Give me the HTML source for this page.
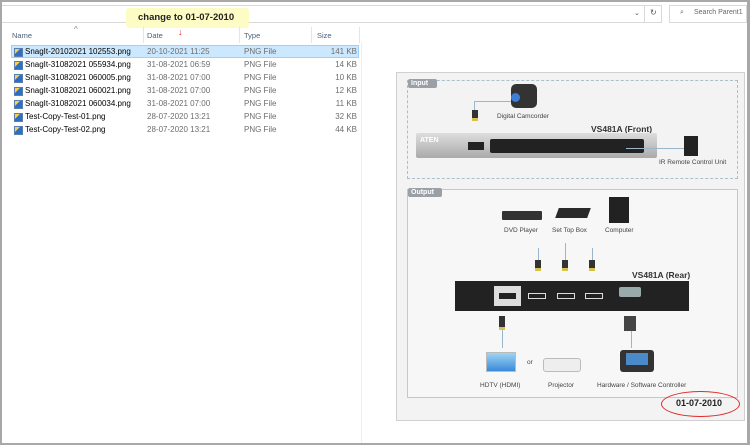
<!DOCTYPE html>
<html><head><meta charset="utf-8"><style>
*{margin:0;padding:0;box-sizing:border-box}
body{width:750px;height:445px;background:#fff;position:relative;overflow:hidden;font-family:"Liberation Sans",sans-serif}
.a{position:absolute}
.t{position:absolute;font-size:8px;color:#000;white-space:nowrap}
.g{color:#6d6d6d}
.h{position:absolute;font-size:7.5px;color:#4c607a;top:31px}
.ico{position:absolute;width:9px;height:9px;background:linear-gradient(135deg,#f5d24a 35%,#2d6fc4 36%);border:1px solid #5a7fae}
.lab{position:absolute;font-size:6.5px;color:#444;white-space:nowrap}
.dev{position:absolute;background:#2a2a2a;border-radius:2px}
.plug{position:absolute;width:6px;height:11px;background:#333;border-bottom:3px solid #d8c24a}
.vl{position:absolute;width:1px;background:#9ab6c8}
</style></head><body>
<div class="a" style="left:0;top:0;width:750px;height:2px;background:#a8a8a8"></div>
<div class="a" style="left:0;top:0;width:2px;height:445px;background:#a8a8a8"></div>
<div class="a" style="left:747px;top:0;width:3px;height:445px;background:#a8a8a8"></div>
<div class="a" style="left:0;top:443px;width:750px;height:2px;background:#a8a8a8"></div>
<div class="a" style="left:2px;top:5px;width:660px;height:18px;border:1px solid #d9d9d9;border-left:none"></div>
<div class="a" style="left:644px;top:5px;width:1px;height:18px;background:#d9d9d9"></div>
<div class="t" style="left:634px;top:9px;font-size:7px;color:#555">⌄</div>
<div class="t" style="left:650px;top:8px;font-size:8px;color:#555">↻</div>
<div class="a" style="left:669px;top:5px;width:78px;height:18px;border:1px solid #d9d9d9"></div>
<div class="t" style="left:680px;top:9px;font-size:7px;color:#666">⌕</div>
<div class="t" style="left:694px;top:9px;font-size:7px;color:#666">Search Parent1</div>
<div class="a" style="left:126px;top:8px;width:123px;height:20px;background:#fdfcc4;border-radius:3px"></div>
<div class="t" style="left:138px;top:12px;font-size:9.5px;font-weight:bold;color:#222">change to 01-07-2010</div>
<div class="t" style="left:74px;top:25px;font-size:8px;color:#888">^</div>
<div class="t" style="left:178px;top:27px;font-size:9px;color:#e02020;font-weight:bold">↓</div>
<div class="h" style="left:12px">Name</div><div class="h" style="left:147px">Date</div><div class="h" style="left:244px">Type</div><div class="h" style="left:317px">Size</div>
<div class="a" style="left:143px;top:27px;width:1px;height:16px;background:#e5e5e5"></div>
<div class="a" style="left:239px;top:27px;width:1px;height:16px;background:#e5e5e5"></div>
<div class="a" style="left:311px;top:27px;width:1px;height:16px;background:#e5e5e5"></div>
<div class="a" style="left:359px;top:27px;width:1px;height:16px;background:#e5e5e5"></div>
<div class="a" style="left:361px;top:42px;width:1px;height:401px;background:#eee"></div>
<div class="a" style="left:11px;top:45px;width:348px;height:13px;background:#cce8ff;border:1px solid #99d1ff"></div>
<div id="rows"></div>
<div class="a" style="left:396px;top:72px;width:349px;height:349px;background:#f3f3f3;border:1px solid #d0d0d0"></div>
<div class="a" style="left:407px;top:80px;width:331px;height:99px;border:1px dashed #a8c0cc"></div>
<div class="a" style="left:408px;top:79px;width:29px;height:9px;background:#9aa0a6;border-radius:2px;color:#fff;font-size:7px;font-weight:bold;padding-left:3px;line-height:9px">Input</div>
<div class="a" style="left:407px;top:189px;width:331px;height:209px;border:1px solid #b8ccd6;background:#f7f7f7"></div>
<div class="a" style="left:408px;top:188px;width:34px;height:9px;background:#9aa0a6;border-radius:2px;color:#fff;font-size:7px;font-weight:bold;padding-left:3px;line-height:9px">Output</div>
<div class="a" style="left:511px;top:84px;width:26px;height:24px;background:#333;border-radius:5px"></div>
<div class="a" style="left:511px;top:93px;width:9px;height:9px;background:#3c7ed8;border-radius:50%"></div>
<div class="vl" style="left:474px;top:101px;height:1px;width:37px"></div>
<div class="vl" style="left:474px;top:101px;height:10px"></div>
<div class="plug" style="left:472px;top:110px"></div>
<div class="lab" style="left:497px;top:113px">Digital Camcorder</div>
<div class="lab" style="left:591px;top:124px;font-size:8.5px;font-weight:bold;color:#333">VS481A (Front)</div>
<div class="a" style="left:416px;top:133px;width:241px;height:25px;background:linear-gradient(#ddd,#aaa);border-radius:2px"></div>
<div class="a" style="left:490px;top:139px;width:154px;height:14px;background:#222;border-radius:2px"></div>
<div class="a" style="left:468px;top:142px;width:16px;height:8px;background:#222"></div>
<div class="lab" style="left:420px;top:137px;color:#fff;font-weight:bold;font-size:7px">ATEN</div>
<div class="vl" style="left:626px;top:148px;height:1px;width:58px"></div>
<div class="a" style="left:684px;top:136px;width:14px;height:20px;background:#222"></div>
<div class="lab" style="left:659px;top:159px">IR Remote Control Unit</div>
<div class="a" style="left:502px;top:211px;width:40px;height:9px;background:#333;border-radius:1px"></div>
<div class="a" style="left:557px;top:208px;width:32px;height:10px;background:#2a2a2a;transform:skewX(-20deg)"></div>
<div class="a" style="left:609px;top:197px;width:20px;height:26px;background:#222"></div>
<div class="lab" style="left:504px;top:227px">DVD Player</div>
<div class="lab" style="left:552px;top:227px">Set Top Box</div>
<div class="lab" style="left:605px;top:227px">Computer</div>
<div class="vl" style="left:538px;top:248px;height:12px"></div><div class="vl" style="left:565px;top:243px;height:17px"></div><div class="vl" style="left:592px;top:248px;height:12px"></div>
<div class="plug" style="left:535px;top:260px"></div><div class="plug" style="left:562px;top:260px"></div><div class="plug" style="left:589px;top:260px"></div>
<div class="lab" style="left:632px;top:270px;font-size:8.5px;font-weight:bold;color:#333">VS481A (Rear)</div>
<div class="dev" style="left:455px;top:281px;width:234px;height:30px;background:#222;border-radius:0"></div>
<div class="a" style="left:494px;top:286px;width:27px;height:20px;background:#ddd"></div>
<div class="a" style="left:499px;top:293px;width:17px;height:6px;background:#222"></div>
<div class="a" style="left:528px;top:293px;width:18px;height:6px;border:1px solid #ddd"></div>
<div class="a" style="left:557px;top:293px;width:18px;height:6px;border:1px solid #ddd"></div>
<div class="a" style="left:585px;top:293px;width:18px;height:6px;border:1px solid #ddd"></div>
<div class="a" style="left:619px;top:287px;width:22px;height:10px;background:#9aa;border-radius:2px"></div>
<div class="plug" style="left:499px;top:316px;height:14px"></div>
<div class="vl" style="left:502px;top:330px;height:18px"></div>
<div class="a" style="left:624px;top:316px;width:12px;height:15px;background:#444"></div>
<div class="vl" style="left:631px;top:331px;height:17px"></div>
<div class="a" style="left:486px;top:352px;width:30px;height:20px;background:linear-gradient(#9fd4f4,#3a8ad8);border:1px solid #bbb"></div>
<div class="lab" style="left:527px;top:359px">or</div>
<div class="a" style="left:543px;top:358px;width:38px;height:14px;background:#eee;border:1px solid #bbb;border-radius:3px"></div>
<div class="a" style="left:620px;top:350px;width:34px;height:22px;background:#333;border-radius:3px"></div>
<div class="a" style="left:626px;top:353px;width:22px;height:12px;background:#4b8ac8"></div>
<div class="lab" style="left:480px;top:382px">HDTV (HDMI)</div>
<div class="lab" style="left:548px;top:382px">Projector</div>
<div class="lab" style="left:597px;top:382px">Hardware / Software Controller</div>
<div class="a" style="left:661px;top:391px;width:79px;height:26px;border:1px solid #e02a2a;border-radius:50%"></div>
<div class="lab" style="left:676px;top:398px;font-size:9px;font-weight:bold;color:#222">01-07-2010</div>
<script>
var r=[["SnagIt-20102021 102553.png","20-10-2021 11:25","141 KB"],["SnagIt-31082021 055934.png","31-08-2021 06:59","14 KB"],["SnagIt-31082021 060005.png","31-08-2021 07:00","10 KB"],["SnagIt-31082021 060021.png","31-08-2021 07:00","12 KB"],["SnagIt-31082021 060034.png","31-08-2021 07:00","11 KB"],["Test-Copy-Test-01.png","28-07-2020 13:21","32 KB"],["Test-Copy-Test-02.png","28-07-2020 13:21","44 KB"]];
var h="";r.forEach(function(x,i){var y=47+i*13;h+='<div class="ico" style="left:14px;top:'+(y+1)+'px"></div><div class="t" style="left:25px;top:'+y+'px">'+x[0]+'</div><div class="t g" style="left:147px;top:'+y+'px">'+x[1]+'</div><div class="t g" style="left:244px;top:'+y+'px">PNG File</div><div class="t g" style="right:393px;top:'+y+'px">'+x[2]+'</div>';});
document.getElementById("rows").innerHTML=h;
</script>
</body></html>
